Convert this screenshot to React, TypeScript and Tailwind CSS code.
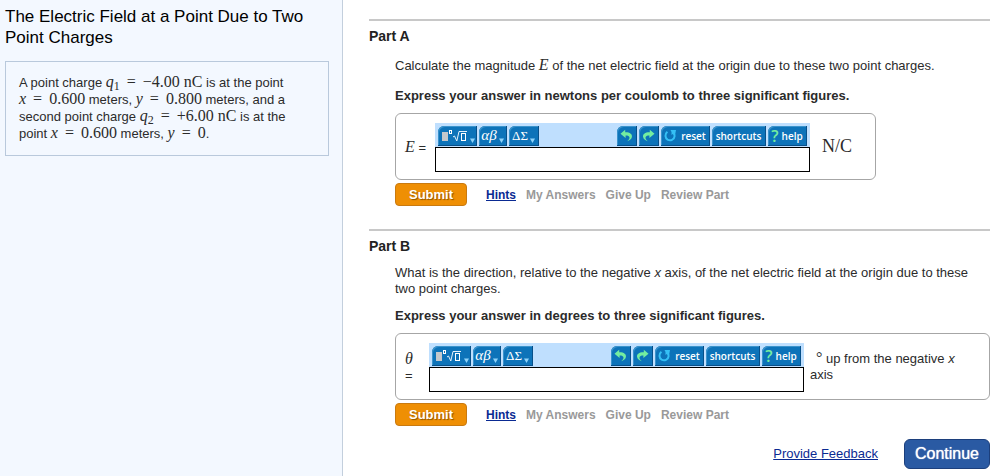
import type { ReactNode } from "react";

interface AnswerBoxProps {
  id: string;
  label: ReactNode;
  unit: ReactNode;
  full?: boolean;
}

function Sym({ children }: { children: ReactNode }) {
  return (
    <span className="font-['Liberation_Serif',serif] text-base leading-none italic">{children}</span>
  );
}

// "<variable> = <value>" kept on one line
function Equation({ name, sub, value }: { name: string; sub?: string; value: string }) {
  return (
    <span className="font-['Liberation_Serif',serif] text-base leading-none whitespace-nowrap">
      <i>{name}</i>
      {sub && <sub className="text-xs leading-none">{sub}</sub>}
      <span className="mx-[7px]">=</span>
      {value}
    </span>
  );
}

function ToolButton({ label, className, children }: { label: string; className: string; children: ReactNode }) {
  return (
    <button
      type="button"
      aria-label={label}
      className={`flex h-5 items-center justify-center rounded-tl-md border-r border-b border-[#07508a] bg-[#0d73b9] font-['Open_Sans',sans-serif] text-[10px] leading-none font-semibold text-white shadow-[inset_1px_1px_0_#3a93cc] ${className}`}
    >
      {children}
    </button>
  );
}

function Caret() {
  return (
    <svg width="5" height="5" viewBox="0 0 5 5" className="mb-0.5 shrink-0 self-end">
      <path d="M0 0.5h5L2.5 5z" fill="#8fd3fa" />
    </svg>
  );
}

function TemplateIcon() {
  return (
    <svg width="26" height="14" viewBox="0 0 26 14" fill="none" className="shrink-0">
      <rect x="0" y="3" width="6" height="9" fill="#c4c8cc" />
      <rect x="7.5" y="1.5" width="2" height="3" stroke="#fff" />
      <path d="M11 8l1.5-1 2.3 5L17 2.5h8" stroke="#e4f2fc" />
      <rect x="19.5" y="4.5" width="4" height="7" stroke="#fff" />
    </svg>
  );
}

// Curved arrow that points left and whose tail drops to the lower right
function UndoIcon({ flip = false }: { flip?: boolean }) {
  return (
    <svg width="13" height="13" viewBox="0 0 13 13" className={flip ? "-scale-x-100" : ""}>
      <path
        d="M0.5 4.8L5.2 0.8V3.2C10 3.1 12.5 5.2 11.9 8C11.5 10 9.8 11.5 7.2 12.3C9.3 10.5 10 9 9.2 7.7C8.5 6.7 7.2 6.4 5.6 6.5V9z"
        fill="#74eda0"
      />
    </svg>
  );
}

function ResetIcon() {
  return (
    <svg width="13" height="13" viewBox="0 0 13 13" fill="none" className="shrink-0">
      <path d="M3.4 2.8C0.6 5 1 9 3.6 10.6C6.4 12.2 10.3 10.8 10.6 7.2C10.7 6 10.3 5 9.4 4" stroke="#35c0f5" strokeWidth="2" />
      <path d="M6.5 1H12L11 6.2L9.4 4.6L7.5 6V3z" fill="#35c0f5" />
    </svg>
  );
}

function Toolbar() {
  return (
    <div className="flex h-6 items-end justify-between bg-[#bfdffe] pr-[3px] pb-px pl-[3px]">
      <div className="flex gap-0.5">
        <ToolButton label="Templates" className="w-[39px] gap-0.5 pl-0.5">
          <TemplateIcon />
          <Caret />
        </ToolButton>
        <ToolButton label="Greek letters" className="w-7 gap-0.5">
          <span className="font-['Liberation_Serif',serif] text-[15px] leading-none font-normal italic">αβ</span>
          <Caret />
        </ToolButton>
        <ToolButton label="Operators" className="w-[30px] gap-0.5">
          <span className="font-['Liberation_Serif',serif] text-[13px] leading-none font-normal">ΔΣ</span>
          <Caret />
        </ToolButton>
      </div>
      <div className="flex gap-0.5">
        <ToolButton label="Undo" className="w-5">
          <UndoIcon />
        </ToolButton>
        <ToolButton label="Redo" className="w-5">
          <UndoIcon flip />
        </ToolButton>
        <ToolButton label="Reset" className="w-[49px] gap-1">
          <ResetIcon />
          reset
        </ToolButton>
        <ToolButton label="Shortcuts" className="w-[54px]">
          shortcuts
        </ToolButton>
        <ToolButton label="Help" className="w-[39px] gap-[3px]">
          <span className="text-base leading-none text-[#74eda0]">?</span>
          help
        </ToolButton>
      </div>
    </div>
  );
}

function AnswerBox({ id, label, unit, full = false }: AnswerBoxProps) {
  return (
    <div
      className={`mt-[9px] flex h-[67px] items-center rounded-md border border-[#a6a6a6] px-[9px] pt-0.5 ${full ? "" : "w-fit"}`}
    >
      <label htmlFor={id} className={`shrink-0 ${full ? "w-6" : "w-[30px]"}`}>
        {label}
      </label>
      <div className="w-[375px] shrink-0">
        <Toolbar />
        <input id={id} type="text" className="block h-[25px] w-full border border-black bg-white px-1 outline-none" />
      </div>
      {unit}
    </div>
  );
}

function Actions() {
  return (
    <div className="mt-[3px] flex items-center text-xs font-bold text-[#999]">
      <button
        type="submit"
        className="h-[23px] w-[72px] rounded border border-[#c97a10] bg-[#ef8f04] text-[13px] text-white [text-shadow:1px_1px_1px_#8a5200]"
      >
        Submit
      </button>
      <a href="#hints" className="ml-[19px] text-[#0a2a92] underline">
        Hints
      </a>
      <button type="button" disabled className="ml-2.5">
        My Answers
      </button>
      <button type="button" disabled className="ml-2.5">
        Give Up
      </button>
      <button type="button" disabled className="ml-2.5">
        Review Part
      </button>
    </div>
  );
}

function Part({ title, question, instruction, children }: { title: string; question: ReactNode; instruction: string; children: ReactNode }) {
  return (
    <form className="border-t-2 border-[#c8c8c8] pt-[5px]" onSubmit={e => e.preventDefault()}>
      <h2 className="text-sm leading-5 font-bold text-[#222]">{title}</h2>
      <div className="mt-[9px] pl-[26px]">
        <p>{question}</p>
        <p className="mt-[11px] font-bold">{instruction}</p>
        {children}
        <Actions />
      </div>
    </form>
  );
}

export default function App() {
  return (
    <div className="flex min-h-screen bg-white font-['Liberation_Sans',Arial,sans-serif] text-[13px] leading-4 text-[#2b2b2b]">
      <aside className="w-[343px] shrink-0 border-r border-[#c3cfdd] bg-[#f3f8ff] pt-1.5 pr-[13px] pl-[5px]">
        <h1 className="text-[17px] leading-[21px] text-black">The Electric Field at a Point Due to Two Point Charges</h1>
        <div className="mt-[13px] border border-[#b9c9dc] pt-3 pr-6 pb-[13px] pl-[13px] leading-[17px]">
          A point charge <Equation name="q" sub="1" value="−4.00 nC" /> is at the point <Equation name="x" value="0.600" /> meters,{" "}
          <Equation name="y" value="0.800" /> meters, and a second point charge <Equation name="q" sub="2" value="+6.00 nC" /> is at the point{" "}
          <Equation name="x" value="0.600" /> meters, <Equation name="y" value="0" />.
        </div>
      </aside>

      <main className="min-w-0 flex-1 pt-[19px] pr-[18px] pl-[26px]">
        <div className="flex flex-col gap-[23px]">
          <Part
            title="Part A"
            question={
              <span className="block leading-[22px]">
                Calculate the magnitude <Sym>E</Sym> of the net electric field at the origin due to these two point charges.
              </span>
            }
            instruction="Express your answer in newtons per coulomb to three significant figures."
          >
            <AnswerBox
              id="answer-a"
              label={
                <>
                  <Sym>E</Sym> =
                </>
              }
              unit={<span className="mr-3.5 mb-1 ml-3 font-['Liberation_Serif',serif] text-lg leading-5">N/C</span>}
            />
          </Part>

          <Part
            title="Part B"
            question={
              <>
                What is the direction, relative to the negative <i>x</i> axis, of the net electric field at the origin due to these two point
                charges.
              </>
            }
            instruction="Express your answer in degrees to three significant figures."
          >
            <AnswerBox
              full
              id="answer-b"
              label={
                <>
                  <Sym>θ</Sym>
                  <br />=
                </>
              }
              unit={
                <span className="mb-0.5 ml-1.5">
                  <span className="ml-1.5 font-['Liberation_Serif',serif] text-base leading-none">°</span> up from the negative <i>x</i> axis
                </span>
              }
            />
          </Part>
        </div>

        <div className="mt-[13px] flex items-center justify-end gap-[26px]">
          <a href="#feedback" className="text-[#0a2a92] underline">
            Provide Feedback
          </a>
          <button
            type="button"
            className="h-[30px] w-[86px] rounded-md border border-[#1c3f7c] bg-[#2a5aa3] text-base text-white [text-shadow:0_0_1px_#fff]"
          >
            Continue
          </button>
        </div>
      </main>
    </div>
  );
}
